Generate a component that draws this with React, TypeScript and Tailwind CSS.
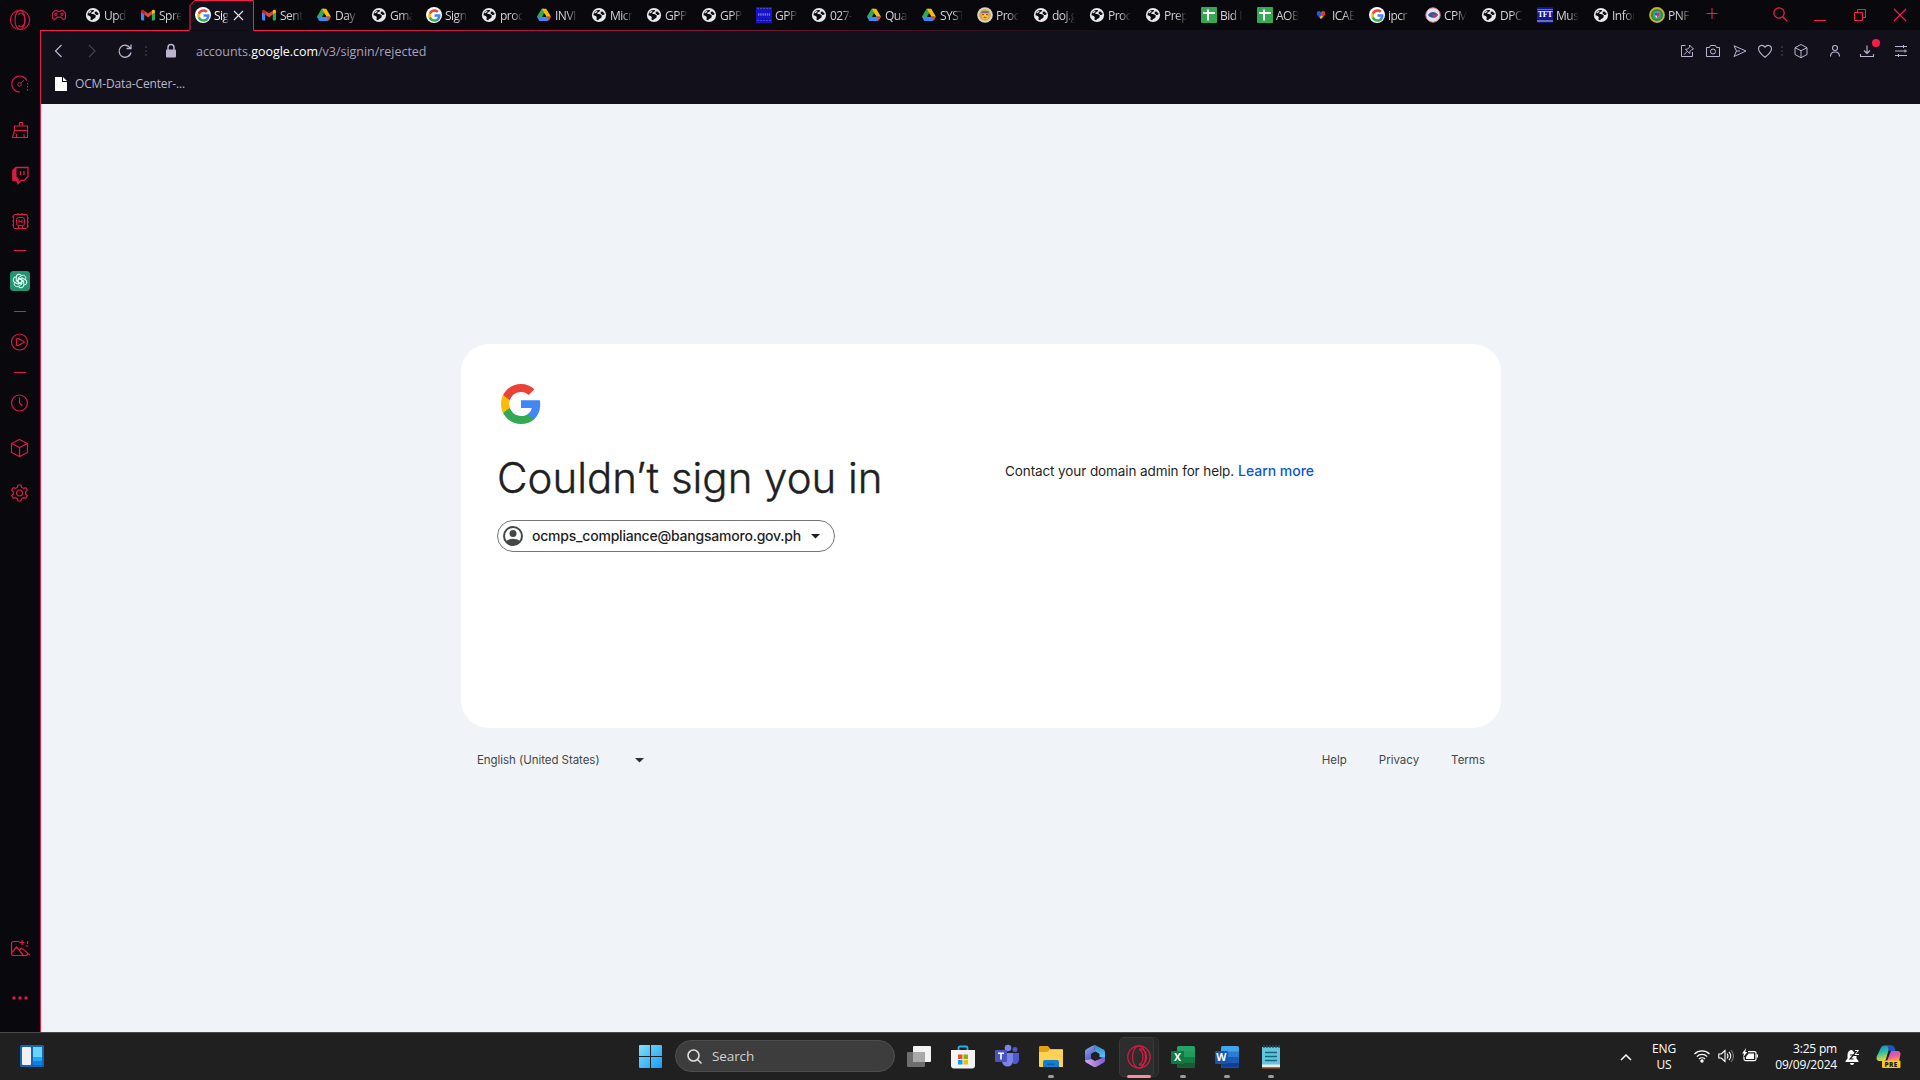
import React from 'react';

type IconName = 'globe' | 'gmail' | 'google' | 'drive' | 'sheet' | 'gppb' | 'seal' | 'icab' | 'cpm' | 'tft' | 'pnp';

function Globe() {
  return (
    <svg className="size-4" viewBox="0 0 16 16">
      <circle cx="8" cy="8" r="7.1" fill="#e8eaed" />
      <path d="M3 5.400C4.500 3.400 7 2.800 9 3.200L8.600 4.600 6.600 5.400 6.200 6.800l2.800.4 1.800 1.200-.4 2.400-2.200 1.200-1.200 1.200-1.600-.6.4-2.600-1.600-1.200L2.400 8.200z" fill="#0b0a10" />
      <path d="M9.600 4.800 11.600 4.400l1.600 1.800.2 1.600-2 .2-1.600-1.400z" fill="#0b0a10" />
      <path d="M4.600 4.200 6.600 3.900 5.600 5.600 3.800 6.600 3.400 5.600Z" fill="#e8eaed" />
    </svg>
  );
}

function GoogleG({ className }: { className: string }) {
  return (
    <svg className={className} viewBox="-2.4 -2.4 52.8 52.8">
      <path fill="#4285F4" d="M45.12 24.5c0-1.56-.14-3.06-.4-4.5H24v8.51h11.84c-.51 2.75-2.06 5.08-4.39 6.64v5.52h7.11c4.16-3.83 6.56-9.47 6.56-16.17z" />
      <path fill="#34A853" d="M24 46c5.94 0 10.92-1.97 14.56-5.33l-7.11-5.52c-1.97 1.32-4.49 2.1-7.45 2.1-5.73 0-10.58-3.87-12.31-9.07H4.34v5.7C7.96 41.07 15.4 46 24 46z" />
      <path fill="#FBBC05" d="M11.69 28.18C11.25 26.86 11 25.45 11 24s.25-2.86.69-4.18v-5.7H4.34C2.85 17.09 2 20.45 2 24c0 3.55.85 6.91 2.34 9.88l7.35-5.7z" />
      <path fill="#EA4335" d="M24 10.75c3.23 0 6.13 1.11 8.41 3.29l6.31-6.31C34.91 4.18 29.93 2 24 2 15.4 2 7.96 6.93 4.34 14.12l7.35 5.7c1.73-5.2 6.58-9.07 12.31-9.07z" />
    </svg>
  );
}

function Favicon({ name }: { name: IconName }) {
  switch (name) {
    case 'globe':
      return <Globe />;
    case 'gmail':
      return (
        <svg className="size-4" viewBox="0 0 16 16">
          <path fill="#4285f4" d="M1 4.5 4.2 7v6.4H2.1A1.1 1.1 0 0 1 1 12.3z" />
          <path fill="#34a853" d="M11.8 7 15 4.5v7.8a1.1 1.1 0 0 1-1.1 1.1h-2.1z" />
          <path fill="#ea4335" d="M4.2 3.7 8 6.6l3.8-2.9V7.6L8 10.5 4.2 7.6z" />
          <path fill="#c5221f" d="M1 4.2c0-1.4 1.5-2 2.6-1.1l.6.6v3.9L1 5.2z" />
          <path fill="#fbbc04" d="M15 4.2c0-1.4-1.5-2-2.6-1.1l-.6.6v3.9L15 5.2z" />
        </svg>
      );
    case 'google':
      return (
        <span className="flex size-4 shrink-0 items-center justify-center rounded-full bg-white">
          <GoogleG className="size-[15px]" />
        </span>
      );
    case 'drive':
      return (
        <svg className="size-4" viewBox="0 0 16 16">
          <path fill="#34a853" d="M5.6 1.8H8L10 5.3 4 13.6 1 9.6z" />
          <path fill="#fbbc04" d="M6 1.8h4.2l4.8 7.9h-4.6z" />
          <path fill="#4285f4" d="M3.8 9.7H13L11.8 14H3.2L1 9.8z" />
          <path fill="#ea4335" d="M10.6 9.7H15l-2.4 4.2z" />
          <path fill="#0b0a10" d="m8 6.2 2 3.5H6z" />
        </svg>
      );
    case 'sheet':
      return (
        <svg className="size-4" viewBox="0 0 16 16">
          <rect width="16" height="16" rx="1" fill="#34a853" />
          <path fill="#fff" d="M6 2.500h2V5h6v2H8v6.500H6V7H2V5h4z" />
        </svg>
      );
    case 'gppb':
      return (
        <svg className="size-4" viewBox="0 0 16 16">
          <rect width="16" height="16" fill="#1712c8" />
          <path stroke="#4a47b9" strokeDasharray="2 1" d="M1 1.500h14M1 13.500h14" />
          <path stroke="#6f6de5" strokeWidth="2.600" strokeDasharray="1.400 .8" d="M2 7.500h12" />
        </svg>
      );
    case 'seal':
      return (
        <svg className="size-4" viewBox="0 0 16 16">
          <circle cx="8" cy="8" r="7.8" fill="#d9d3cf" />
          <circle cx="8" cy="8" r="5.8" fill="#d9a63f" />
          <path fill="#f4dc3c" d="M4.5 7h7l-1.500 5h-4z" />
          <path stroke="#3569b8" strokeWidth="1.4" d="M4.4 5h7.2" />
          <path stroke="#d03a32" strokeWidth="1.3" d="M5 7.6h2M9 7.6h2M6.5 10.5h3" />
        </svg>
      );
    case 'icab':
      return (
        <svg className="size-4" viewBox="0 0 16 16">
          <path fill="#1d5ae0" d="M8 12C4 9 3.4 7 4 5.2 5 3.4 7 3.8 8 5.4z" />
          <path fill="#e23a2c" d="M8 12c4-3 4.6-5 4-6.8C11 3.4 9 3.8 8 5.4z" />
          <path fill="#f5b90f" d="m8 8.4 2 1.2-2 2.4-1.4-1.4z" />
        </svg>
      );
    case 'cpm':
      return (
        <svg className="size-4" viewBox="0 0 16 16">
          <circle cx="8" cy="8" r="7.2" fill="#e8e2ea" stroke="#c78a9b" />
          <path fill="#2b57a8" d="M3 8c2-4 8-4 10 0-2 3.6-8 3.6-10 0z" />
          <path fill="#d8323c" d="M6 7.6h7L10 11z" />
        </svg>
      );
    case 'tft':
      return (
        <span className="flex size-4 shrink-0 flex-col items-center justify-center border-y border-[#0a1788] bg-[#10199a] font-['Liberation_Serif',serif] text-[8px] leading-none font-bold tracking-[-0.3px] text-white">
          <span className="mb-px h-[1.500px] w-full bg-[#6f7094]" />
          TFT
          <span className="mt-px h-[1.500px] w-full bg-[#6f7094]" />
        </span>
      );
    case 'pnp':
      return (
        <svg className="size-4" viewBox="0 0 16 16">
          <circle cx="8" cy="8" r="7" fill="#2d8a4d" stroke="#c2b62c" strokeWidth="1.8" />
          <circle cx="8" cy="8" r="4" fill="#4c9d86" />
          <path fill="#e9e6ef" d="M6 5.5h4V9l-2 2-2-2z" />
          <path fill="#cf3550" d="M8 5.5h2V9L8 11z" />
          <path fill="#3b55b0" d="M6 5.5h2v3H6z" />
        </svg>
      );
  }
}

const narrowTabs: [IconName, string][] = [
  ['gmail', 'Sent'], ['drive', 'Day '], ['globe', 'Gma'], ['google', 'Sign'], ['globe', 'proc'], ['drive', 'INVI'],
  ['globe', 'Micr'], ['globe', 'GPP'], ['globe', 'GPP'], ['gppb', 'GPP'], ['globe', '027-'], ['drive', 'Qua'],
  ['drive', 'SYST'],
];
const wideTabs: [IconName, string][] = [
  ['seal', 'Proc'], ['globe', 'doj.g'], ['globe', 'Proc'], ['globe', 'Prep'], ['sheet', 'Bid I'], ['sheet', 'AOB'],
  ['icab', 'ICAE'], ['google', 'ipcr'], ['cpm', 'CPM'], ['globe', 'DPC'], ['tft', 'Mus'], ['globe', 'Infor'], ['pnp', 'PNF'],
];

function TabBody({ icon, label }: { icon: IconName; label: string }) {
  return (
    <>
      <Favicon name={icon} />
      <span className="mt-[2px] ml-[3px] w-[30px] shrink-0 text-[12px] tracking-[-0.5px] whitespace-pre text-[#d3d2d8] [mask-image:linear-gradient(to_right,black_12px,transparent_23px)]">
        {label}
      </span>
    </>
  );
}

function WindowControls() {
  return (
    <div className="ml-auto flex h-[30px] items-center text-[#fa1e4e]">
      <svg className="size-10" viewBox="0 0 40 40" fill="none" stroke="currentColor" strokeWidth="1.2">
        <circle cx="19" cy="18" r="5.2" /><path d="m23 22 4.4 4.4" />
      </svg>
      <svg className="size-10" viewBox="0 0 40 40" fill="none" stroke="currentColor"><path d="M14 25.5h12" /></svg>
      <svg className="size-10" viewBox="0 0 40 40" fill="none" stroke="currentColor">
        <path d="M14.5 17.5h8v8h-8zM17.500 17.500v-3h8v8h-3" />
      </svg>
      <svg className="size-10" viewBox="0 0 40 40" fill="none" stroke="currentColor" strokeWidth="1.1"><path d="m14 14 12 12M26 14 14 26" /></svg>
    </div>
  );
}

function TabStrip() {
  return (
    <div className="relative flex h-[31px] bg-[#09080d]">
      <div className="absolute top-[30px] -left-px h-px w-[149px] bg-[#fa1e4e]" />
      <div className="absolute top-[30px] left-[212px] h-px w-[1668px] bg-[#12101a]" />
      <div className="absolute top-[30px] left-[212px] h-px w-[860px] bg-linear-to-r from-[#fa1e4e] to-transparent" />
      <div className="flex h-[30px] w-[44px] items-center pl-[10px]">
        <svg className="h-[14px] w-4" viewBox="0 0 16 14" fill="none" stroke="#c81a42" strokeWidth="1.2">
          <path d="M4 2.500h2.200l1 1h1.600l1-1H12L14.400 5v5.500l-1.800 1.300-2.800-2.600H6.200l-2.800 2.600-1.800-1.300V5z" />
          <circle cx="5" cy="6.300" r="1.100" /><circle cx="11" cy="6.300" r="1.100" />
        </svg>
      </div>
      <div className="flex h-[30px] w-[55px] items-center"><TabBody icon="globe" label="Upd" /></div>
      <div className="flex h-[30px] w-[49px] items-center"><TabBody icon="gmail" label="Spre" /></div>
      <div className="relative flex h-[31px] w-[65px] items-center pb-px pl-[6px]">
        <svg className="absolute inset-0 h-[31px] w-[65px]" viewBox="0 0 65 31">
          <path d="M.5 30.500 1 30V5.500L5.500.5h59v30" fill="#12101a" stroke="#fa1e4e" />
        </svg>
        <span className="relative"><Favicon name="google" /></span>
        <span className="relative mt-[2px] ml-[3px] w-[19px] shrink-0 text-[12px] tracking-[-0.5px] text-white [mask-image:linear-gradient(to_right,black_9px,transparent_15px)]">Sig</span>
        <svg className="relative size-[11px]" viewBox="0 0 11 11" stroke="#e6e4ee" strokeWidth="1.1"><path d="m1 1 9 9M10 1 1 10" /></svg>
      </div>
      <div className="flex h-[30px] pl-[7px]">
        <div className="flex w-[716px]">
          {narrowTabs.map(([icon, label], i) => (
            <div key={i} className="flex w-[55px] shrink-0 items-center"><TabBody icon={icon} label={label} /></div>
          ))}
        </div>
        {wideTabs.map(([icon, label], i) => (
          <div key={i} className="flex w-14 items-center"><TabBody icon={icon} label={label} /></div>
        ))}
      </div>
      <svg className="mt-2 ml-px size-3" viewBox="0 0 12 12" stroke="#fa1e4e"><path d="M.5 5.500h11M6 0v11" /></svg>
      <WindowControls />
    </div>
  );
}

function Dots() {
  return (
    <svg className="h-[14px] w-1" viewBox="0 0 4 14" fill="#2f2b40"><path d="M1 2h2v2H1zM1 6h2v2H1zM1 10h2v2H1z" /></svg>
  );
}

const tool = 'size-4 shrink-0';

function AddressBar() {
  return (
    <div className="flex h-10 items-center text-[#bdb4d2]">
      <svg className="ml-[9px] size-4" viewBox="0 0 16 16" fill="none" stroke="currentColor" strokeWidth="1.200"><path d="M11.500 2 5.500 8l6 6" /></svg>
      <svg className="ml-[18px] size-4 text-[#454154]" viewBox="0 0 16 16" fill="none" stroke="currentColor" strokeWidth="1.200"><path d="m5 2 6 6-6 6" /></svg>
      <svg className="ml-[17px] size-4" viewBox="0 0 16 16" fill="none" stroke="currentColor" strokeWidth="1.300">
        <path d="M13.200 5A6 6 0 1 0 14 9.500M14 1.500v4h-4.500" />
      </svg>
      <span className="ml-[11px]"><Dots /></span>
      <svg className="ml-[15px] size-4" viewBox="0 0 16 16" fill="none">
        <rect x="3" y="6.500" width="10" height="8" rx="1" fill="#bdb4d2" /><path d="M5 7V4.500a3 3 0 0 1 6 0V7" stroke="#bdb4d2" strokeWidth="1.500" />
      </svg>
      <div className="mt-[2px] ml-[17px] text-[12.5px] tracking-[-0.03px] whitespace-nowrap text-[#aaa2be]">
        accounts.<span className="text-white">google.com</span>/v3/signin/rejected
      </div>
      <div className="ml-auto flex items-center">
        <svg className={tool} viewBox="0 0 16 16" fill="none" stroke="currentColor">
          <path d="M6.500 2.500h-4v11h11V9M10.500 2l4 4-1.500.3-2 2-.3 2.200L6.500 6.300l2.200-.3 2-2zM8.500 8.200l-3.500 3.500" />
        </svg>
        <svg className={`${tool} ml-[10px]`} viewBox="0 0 16 16" fill="none" stroke="currentColor">
          <path d="M1.500 4.500h3l1-2h5l1 2h3v9h-13z" /><circle cx="8" cy="8.500" r="2.500" />
        </svg>
        <svg className={`${tool} ml-[11px]`} viewBox="0 0 16 16" fill="none" stroke="currentColor"><path d="M2 2.800 14 8 2 13.500 4.500 8zM4.500 8H8" /></svg>
        <svg className={`${tool} ml-[9px]`} viewBox="0 0 16 16" fill="none" stroke="currentColor" strokeWidth="1.100">
          <path d="M8 14.300C4.500 11.500 1.500 9 1.500 5.700 1.500 2.300 6 1 8 4.200c2-3.200 6.500-1.900 6.500 1.500 0 3.300-3 5.800-6.500 8.600z" />
        </svg>
        <span className="ml-[7px]"><Dots /></span>
        <svg className={`${tool} ml-[9px]`} viewBox="0 0 16 16" fill="none" stroke="currentColor"><path d="M8 1.500 14 4.700v6.800L8 14.700l-6-3.200V4.700zM2 4.700l6 3 6-3M8 7.700v7" /></svg>
        <svg className={`${tool} ml-[18px]`} viewBox="0 0 16 16" fill="none" stroke="currentColor" strokeWidth="1.100">
          <circle cx="8" cy="5" r="2.500" /><path d="M3.500 13.500c0-6 9-6 9 0" />
        </svg>
        <span className="relative ml-4 size-4">
          <svg className="size-4" viewBox="0 0 16 16" fill="none" stroke="currentColor" strokeWidth="1.100"><path d="M8 2.500v8M5 7.500l3 3 3-3M1.500 11v2.500h13V11" /></svg>
          <span className="absolute -top-1 left-[13px] size-2 rounded-full bg-[#ff1b4b]" />
        </span>
        <svg className={`${tool} mr-[11px] ml-[18px]`} viewBox="0 0 16 16" fill="none" stroke="currentColor"><path d="M2 3.500h12M2 8h12M2 12.500h12M10.500 2v3M12 6.500v3M5.500 11v3" /></svg>
      </div>
    </div>
  );
}

const cell = 'flex w-10 shrink-0 items-center justify-center';
const sic = 'size-5 fill-none stroke-current';

function Divider({ className }: { className: string }) {
  return <div className={`${cell} ${className}`}><div className="h-px w-3 bg-[#e01c48]" /></div>;
}

function Sidebar() {
  return (
    <div className="flex w-10 shrink-0 flex-col bg-[#09080d] text-[#dc1b46]">
      <div className={`${cell} h-10`}>
        <svg className="size-[22px] fill-none stroke-current" viewBox="0 0 22 22" strokeWidth="1.100">
          <circle cx="11" cy="11" r="9.600" /><ellipse cx="11" cy="11" rx="5" ry="9.500" /><path d="M9.500 5.500c3-3 6.500 0 6.500 5.500s-3.500 8.500-6.500 5.500" />
        </svg>
      </div>
      <div className={`${cell} mt-[21px] h-[46px]`}>
        <svg className={sic} viewBox="0 0 20 20">
          <path d="M10 18A8 8 0 1 1 17 6.500" strokeWidth="1.200" /><path d="M17.500 9v9" strokeDasharray="1.500 1.500" /><circle cx="9.500" cy="10.500" r="1.800" /><path d="m11 9 3-3" />
        </svg>
      </div>
      <div className={`${cell} h-[46px]`}>
        <svg className={sic} viewBox="0 0 20 20"><path d="M9.500 6V2.500h3V6M4.500 6h13v4.500h-13zM4.500 10.500l-2 7h15v-7M6.500 17v-3M14 17v-3" strokeWidth="1.100" /></svg>
      </div>
      <div className={`${cell} h-[44px]`}>
        <svg className={sic} viewBox="0 0 20 20"><path d="M6 2.500h12v9l-4 4h-3l-3 3v-3H3v-10zM10.500 6v4M14 6v4" strokeWidth="1.300" /><path d="M3 5.500 6 2.500v9l2 2v4l-1 .5v-3H3z" fill="currentColor" /></svg>
      </div>
      <div className={`${cell} h-[47px]`}>
        <svg className={sic} viewBox="0 0 20 20"><rect x="3.500" y="3.500" width="14" height="14" rx="1.500" /><rect x="6.500" y="6.500" width="8" height="8" rx="2" /><path d="M9 8.500v4M12 8.500v4M9 10.500h3M2 6h1.500M2 10h1.500M2 14h1.500M17.500 7H19M17.500 11H19M17.500 15H19M8 2v1.500M12 2v1.500M8.500 14.500v3M12.500 14.500v3" /></svg>
      </div>
      <Divider className="h-[13px]" />
      <div className={`${cell} h-[47px]`}>
        <svg className="size-5" viewBox="0 0 20 20">
          <rect width="20" height="20" rx="3.500" fill="#229474" />
          <g transform="translate(10 10)" fill="none" stroke="#e9fff8" strokeWidth="1">
            {[0, 60, 120, 180, 240, 300].map((a) => (
              <path key={a} transform={`rotate(${a})`} d="M-1.800 2.900V-3.200L1.700-5.400C4.500-6.600 6.800-3.600 5.400-1.600" />
            ))}
          </g>
        </svg>
      </div>
      <Divider className="h-[15px]" />
      <div className={`${cell} h-[46px]`}>
        <svg className={sic} viewBox="0 0 20 20" strokeWidth="1.200"><circle cx="9.500" cy="10" r="8" /><path d="M6.500 7 8 6.500l6 3v1l-6 3-1.500-.5z" /></svg>
      </div>
      <Divider className="h-[15px]" />
      <div className={`${cell} h-[46px]`}>
        <svg className={sic} viewBox="0 0 20 20" strokeWidth="1.200"><circle cx="9.500" cy="10" r="8" /><path d="M9.500 4.500V10l3 3" /></svg>
      </div>
      <div className={`${cell} h-[43px]`}>
        <svg className={sic} viewBox="0 0 20 20" strokeWidth="1.200"><path d="M9.500 1.500 17.500 5.500v9l-8 4-8-4v-9zM1.500 5.500l8 4 8-4M9.500 9.500v9" /></svg>
      </div>
      <div className={`${cell} h-[47px]`}>
        <svg className={sic} viewBox="0 0 20 20" strokeWidth="1.200"><circle cx="9.500" cy="10" r="3" /><path d="M8 2h3l.6 2.300 1.900 1.100 2.300-.7 1.500 2.600-1.700 1.700v2l1.700 1.700-1.500 2.600-2.300-.7-1.900 1.100L11 18H8l-.6-2.300-1.900-1.100-2.300.7-1.500-2.600L3.400 11V9L1.700 7.300l1.500-2.600 2.300.7 1.900-1.100z" /></svg>
      </div>
      <div className={`${cell} mt-auto h-[48px]`}>
        <svg className={sic} viewBox="0 0 20 20" strokeWidth="1.200"><path d="M9.500 2.500h-6a2 2 0 0 0-2 2v10a2 2 0 0 0 2 2h12a2 2 0 0 0 2-2M1.500 14l5-6 7 8.500M9.500 11l2-2 8.500 7M12 1v5M9.500 3.500h5M17.500 2v3M15.500 7h3" /></svg>
      </div>
      <div className={`${cell} mb-[9px] h-[50px]`}>
        <svg className="size-5 fill-current" viewBox="0 0 20 20"><circle cx="4" cy="10" r="1.700" /><circle cx="10" cy="10" r="1.700" /><circle cx="16" cy="10" r="1.700" /></svg>
      </div>
    </div>
  );
}

function SignInPage() {
  return (
    <div className="flex grow flex-col bg-[#f0f4f9] pt-[240px] pl-[420px] font-['Inter','Open_Sans',sans-serif]">
      <div className="flex h-[384px] w-[1040px] rounded-[28px] bg-white p-9">
        <div className="flex w-[508px] flex-col items-start">
          <GoogleG className="size-12" />
          <h1 className="mt-[24px] text-[42px] leading-[52px] font-light tracking-[-0.02px] whitespace-nowrap text-[#1f1f1f] [-webkit-text-stroke:0.4px_#1f1f1f]">Couldn’t sign you in</h1>
          <div className="mt-4 flex h-8 w-[338px] items-center rounded-full border border-[#747775] pl-[3px]">
            <svg className="size-6" viewBox="0 0 24 24" fill="#444746">
              <circle cx="12" cy="12" r="9" fill="none" stroke="#444746" strokeWidth="2" />
              <circle cx="12" cy="9.500" r="3.500" />
              <path d="M5 17.200c4-3.200 10-3.200 14 0-1.500 3-4 4.300-7 4.300s-5.500-1.300-7-4.300z" />
            </svg>
            <span className="mb-px ml-[7px] w-[270px] text-[14px] font-medium tracking-[-0.22px] whitespace-nowrap text-[#1f1f1f]">ocmps_compliance@bangsamoro.gov.ph</span>
            <svg className="ml-[9px] h-[5px] w-[9px]" viewBox="0 0 9 5" fill="#1f1f1f"><path d="M0 0h9L4.500 4.500z" /></svg>
          </div>
        </div>
        <div className="mt-[81px] flex h-5 gap-[4px] leading-5 whitespace-nowrap text-[#1f1f1f]">
          <span className="text-[13.5px] tracking-[-0.1px]">Contact your domain admin for help.</span>
          <span className="text-[14px] font-medium tracking-[-0.04px] text-[#0b57d0]">Learn more</span>
        </div>
      </div>
      <div className="mt-[22px] flex h-5 w-[1040px] items-center pr-4 pl-4 text-[11.500px] text-[#444746]">
        <span className="mt-[2px] w-[158px] tracking-[-0.05px] whitespace-nowrap">English (United States)</span>
        <svg className="h-[5px] w-[9px]" viewBox="0 0 9 5" fill="#2d2f31"><path d="M0 0h9L4.500 4.500z" /></svg>
        <span className="mt-[2px] mr-8 ml-auto">Help</span>
        <span className="mt-[2px] mr-8">Privacy</span>
        <span className="mt-[2px]">Terms</span>
      </div>
    </div>
  );
}

function TaskButton({ running, children }: { running?: boolean; children: React.ReactNode }) {
  return (
    <div className="relative flex h-12 w-11 shrink-0 items-center justify-center">
      {children}
      {running && <span className="absolute bottom-[3px] left-[19px] h-[3px] w-[6px] rounded-full bg-[#9b9b9b]" />}
    </div>
  );
}

function OfficeTile({ letter, colors }: { letter: string; colors: string[] }) {
  return (
    <svg className="size-6" viewBox="0 0 24 24">
      <rect x="6" y="1" width="18" height="21.500" rx="1.500" fill={colors[0]} />
      <path fill={colors[1]} d="M6 6.500h18V12H6z" /><path fill={colors[2]} d="M6 12h18v5.500H6z" /><path fill={colors[3]} d="M6 17.500h18V21a1.500 1.500 0 0 1-1.500 1.500h-15L6 21z" />
      <rect y="6" width="13" height="13" rx="1" fill={colors[4]} />
      <text x="6.400" y="16.200" textAnchor="middle" fontSize="10.500" fontWeight="700" fill="#fff" fontFamily="Open Sans, sans-serif">{letter}</text>
    </svg>
  );
}

function Taskbar() {
  return (
    <div className="flex h-12 shrink-0 items-center border-t border-[#4a4a4a] bg-[#202020]">
      <svg className="mb-px ml-5 size-6" viewBox="0 0 24 24">
        <rect y="1" width="24" height="22" rx="1.500" fill="#1565b5" /><rect x="2" y="3" width="9" height="18" rx="1" fill="#f1f1f1" />
        <path fill="#67d6ff" d="M13 3h9v10h-9z" /><path fill="#21a5f5" d="M13 13h9v4h-9z" /><path fill="#0a80e6" d="M13 17h9v4h-9z" />
      </svg>
      <svg className="ml-[595px] size-[23px]" viewBox="0 0 23 23">
        <defs><linearGradient id="win" x2="1" y2="1" gradientUnits="objectBoundingBox"><stop stopColor="#7fe0ff" /><stop offset="1" stopColor="#169cf5" /></linearGradient></defs>
        <path fill="url(#win)" d="M0 1a1 1 0 0 1 1-1h10v11H0zM12 0h10a1 1 0 0 1 1 1v10H12zM0 12h11v11H1a1 1 0 0 1-1-1zM12 12h11v10a1 1 0 0 1-1 1H12z" />
      </svg>
      <div className="mb-px ml-[13px] flex h-8 w-[220px] items-center rounded-full border border-[#4e4e4e] bg-[#3d3d3d] pl-[10px]">
        <svg className="size-[17px]" viewBox="0 0 17 17" fill="none" stroke="#dedede" strokeWidth="1.600"><circle cx="7.500" cy="7.500" r="5.500" /><path d="m11.500 11.500 4 4" /></svg>
        <span className="ml-[9px] text-[13.5px] tracking-[-0.1px] text-[#d0d0d0]">Search</span>
      </div>
      <div className="ml-[2px] flex">
        <TaskButton>
          <svg className="size-6" viewBox="0 0 24 24"><rect x="6" y="1" width="18" height="16" rx="1" fill="#f2f2f2" /><rect y="7" width="18" height="15" rx="1" fill="#6e6e6e" /><path fill="#a9a9a9" d="M6 7h12v10H6z" /></svg>
        </TaskButton>
        <TaskButton>
          <svg className="mr-px size-6" viewBox="0 0 24 24"><path d="M7.500 6V3a1.500 1.500 0 0 1 1.500-1.500h6A1.500 1.500 0 0 1 16.500 3v3" fill="none" stroke="#2aaeea" strokeWidth="1.800" /><path fill="#f4f4f4" d="M0 5h24v15.500a3 3 0 0 1-3 3H3a3 3 0 0 1-3-3z" /><path fill="#f25022" d="M7 9.500h4.500V14H7z" /><path fill="#7fba00" d="M12.500 9.500H17V14h-4.500z" /><path fill="#00a4ef" d="M7 15h4.500v4.500H7z" /><path fill="#ffb900" d="M12.500 15H17v4.500h-4.500z" /></svg>
        </TaskButton>
        <TaskButton>
          <svg className="mb-px size-6" viewBox="0 0 24 24"><circle cx="20" cy="5.500" r="2.500" fill="#5059c9" /><circle cx="13" cy="4" r="3.300" fill="#7b83eb" /><path fill="#5059c9" d="M16 9h8v7a4 4 0 0 1-6 3.500z" /><path fill="#7b83eb" d="M7 9h11v8a5.500 5.500 0 0 1-11 0z" /><rect y="6" width="12" height="12" rx="1" fill="#4b53bc" /><path d="M3 9.200h6M6 9v6.500" stroke="#fff" strokeWidth="1.600" /></svg>
        </TaskButton>
        <TaskButton running>
          <svg className="size-6" viewBox="0 0 24 24"><path fill="#e5a00f" d="M0 2a1 1 0 0 1 1-1h8l2.500 3H24v4H0z" /><path fill="#ffd255" d="M0 7h8l3-2.500h12a1 1 0 0 1 1 1V22H1a1 1 0 0 1-1-1z" /><path fill="#1180d2" d="M4 22v-5a2 2 0 0 1 2-2h12a2 2 0 0 1 2 2v5z" /><path fill="#0b60ae" d="M8 18.500h8V20H8z" /></svg>
        </TaskButton>
        <TaskButton>
          <svg className="mb-px size-6" viewBox="0 0 24 24">
            <defs>
              <linearGradient id="m1" x2=".4" y2="1"><stop stopColor="#8fb4f0" /><stop offset="1" stopColor="#4a4ec0" /></linearGradient>
              <linearGradient id="m2" x2="0" y2="1"><stop stopColor="#3a86c8" /><stop offset="1" stopColor="#58c8fb" /></linearGradient>
              <linearGradient id="m3" x2="1" y2="0"><stop stopColor="#e2a9ee" /><stop offset="1" stopColor="#7c5bd0" /></linearGradient>
            </defs>
            <path fill="url(#m1)" d="M12 1C9 2 3 4.500 2 7v10l6 3 1-7 2-5z" />
            <path fill="url(#m2)" d="m12 1 8.500 4.500Q22 6.500 22 8v6l-6-1-5-5z" />
            <path fill="url(#m3)" d="m2 16.500 7-1.500 5 1 8-3v3.500q0 1.500-1.500 2.300l-7 4q-1.500.8-3 0l-7-4Q2 18 2 16.500z" />
            <path d="M12.300 8 16 10v4.500L12 16.500 8.500 14.500V10z" fill="#202020" stroke="#202020" strokeLinejoin="round" />
          </svg>
        </TaskButton>
        <div className="relative flex h-12 w-11 items-center pl-[2px]">
          <div className="absolute top-1 left-[4px] h-10 w-[38px] rounded-[5px] border border-[#343434] bg-[#282828]" />
          <div className="absolute top-1 left-[2px] h-10 w-[35px] rounded-[5px] border border-[#3b3b3b] bg-[#2d2d2d]" />
          <svg className="relative ml-[8px] size-6" viewBox="0 0 24 24" fill="none" stroke="#d81b46" strokeWidth="1.200"><circle cx="12" cy="12" r="11.200" /><ellipse cx="12" cy="12" rx="6.500" ry="11" /><path d="M12 4.500c2.500-2 7.500 1 7.500 7.500s-5 9.500-7.500 7.500M12 4.500c3 1 4 4.500 4 7.500s-1 6.500-4 7.500" /></svg>
          <span className="absolute bottom-[3px] left-[10px] h-[3px] w-6 rounded-full bg-[#ff8b98]" />
        </div>
        <TaskButton running><OfficeTile letter="X" colors={['#25a366', '#219a60', '#107c41', '#185c37', '#117a43']} /></TaskButton>
        <TaskButton running><OfficeTile letter="W" colors={['#41a5ee', '#2b7cd3', '#185abd', '#103f91', '#1653b3']} /></TaskButton>
        <TaskButton running>
          <svg className="size-6" viewBox="0 0 24 24"><path fill="#64c5dc" d="M3 2h18v18H3z" /><path fill="#e9e9e9" d="M3 19.500h18V22H3z" /><path fill="#b5651d" d="M3 22h18v1.500H3z" /><path d="M6 7.500h12M6 11.500h12M6 15.500h12" stroke="#13687f" strokeWidth="1.500" /><path d="M5 0v3M8 0v3M11 0v3M14 0v3M17 0v3M20 0v3" stroke="#0e5d75" strokeWidth="1.400" /></svg>
        </TaskButton>
      </div>
      <div className="ml-auto flex h-full items-center text-[12px] leading-4 text-white">
        <svg className="size-3" viewBox="0 0 12 12" fill="none" stroke="#fff" strokeWidth="1.500"><path d="m1 9 5-5 5 5" /></svg>
        <div className="ml-[20px] w-6 text-center"><div className="-mx-1 tracking-[-0.2px]">ENG</div><div className="-mx-1 tracking-[-0.2px]">US</div></div>
        <svg className="mb-px ml-[18px] size-4" viewBox="0 0 16 16" fill="none" stroke="#fff" strokeWidth="1.200"><path d="M.5 6a10.500 10.500 0 0 1 15 0M2.800 8.600a7.400 7.400 0 0 1 10.400 0M5 11a4.200 4.200 0 0 1 6 0" /><circle cx="8" cy="13" r="1.100" fill="#fff" /></svg>
        <svg className="mb-px ml-2 size-4" viewBox="0 0 16 16" fill="none" stroke="#fff" strokeWidth="1.100"><path d="M.8 6h2.400L7 2.500v11L3.200 10H.8zM9 5.500q2 2.500 0 5M11 3.800q3.500 4.200 0 8.400" /><path stroke="#777" d="M13 2q5 6 0 12" /></svg>
        <svg className="mb-px ml-2 size-4" viewBox="0 0 16 16" fill="none" stroke="#fff" strokeWidth="1.200"><path d="M6 3.600h6.500a1.500 1.500 0 0 1 1.500 1.500v6a1.500 1.500 0 0 1-1.500 1.500h-9A1.500 1.500 0 0 1 2 11.100V9" /><path fill="#fff" stroke="none" d="M6.500 5.500H12V11H4V9z" /><path d="M15.400 6.500v3" strokeWidth="1.400" /><path fill="#fff" stroke="none" d="M4.200 0 0 5.500h2L1 9.500 5.300 4H3.200z" /></svg>
        <div className="ml-[16px] w-[63px] text-right tracking-[-0.2px] whitespace-nowrap"><div className="-ml-1">3:25 pm</div><div className="-ml-1">09/09/2024</div></div>
        <svg className="ml-[7px] size-4" viewBox="0 0 16 16" fill="#fff"><path d="M8 1C5 1 3.500 3 3.500 6v3.500L1.500 12v1h13v-1l-2-2.500V6z" /><path d="M6 14h4a2 2 0 0 1-4 0z" /><path d="M11 1.500h3.500l-3.500 4h4" fill="none" stroke="#202020" strokeWidth="3" /><path d="M6 6h3.500L6 10h3.500" fill="none" stroke="#202020" strokeWidth="1.200" /><path d="M11 1.500h3.500l-3.500 4h4" fill="none" stroke="#fff" strokeWidth="1" /></svg>
        <svg className="mr-[19px] ml-4 size-[25px]" viewBox="0 0 25 25">
          <defs><linearGradient id="ca" x2=".3" y2="1"><stop stopColor="#1f7bd8" /><stop offset=".5" stopColor="#2cc0a0" /><stop offset="1" stopColor="#f3d23a" /></linearGradient><linearGradient id="cb" x2=".3" y2="1"><stop stopColor="#a55be8" /><stop offset=".6" stopColor="#ea5a9c" /><stop offset="1" stopColor="#f79a5a" /></linearGradient></defs>
          <path fill="url(#ca)" d="M5 3.500C6 2 7 1.500 9 1.500h7.500c-2 0-3 1.500-3.500 3L10 15c-.5 1.500-1.500 2-3 2H4c-3 0-4-2-3.300-4.500z" /><path fill="#1d55b8" d="M11 1.500h4.500c2 0 3 1 3.500 3L19.500 7h-6z" /><path fill="url(#cb)" d="M15 7h6c3 0 4 2 3.300 4.500L23 17H11z" />
          <rect x="6" y="16.500" width="18.500" height="7.500" rx="1" fill="#ffc814" />
          <text x="15.200" y="22.800" textAnchor="middle" fontSize="6.500" fontWeight="800" letterSpacing=".4" fill="#1b1b1b" fontFamily="Open Sans, sans-serif">PRE</text>
        </svg>
      </div>
    </div>
  );
}

export default function App() {
  return (
    <div className="flex h-[1080px] w-[1920px] flex-col overflow-hidden bg-[#09080d] font-['Open_Sans','Noto_Sans',sans-serif]">
      <div className="flex h-[1032px]">
        <Sidebar />
        <div className="flex w-[1880px] flex-col">
          <div className="ml-[1px] h-[31px]"><TabStrip /></div>
          <div className="flex grow border-l border-[#e01c48]">
            <div className="flex w-full flex-col bg-[#12101a]">
              <AddressBar />
              <div className="flex h-[33px] items-center pb-[7px] pl-[14px]">
                <svg className="h-[14px] w-3" viewBox="0 0 12 14"><path fill="#fff" d="M0 0h7v5h5v9H0z" /><path fill="#fff" d="m8 0 4 4H8z" /></svg>
                <span className="mb-px ml-2 text-[12px] tracking-[-0.14px] text-[#bcb6cd]">OCM-Data-Center-...</span>
              </div>
              <SignInPage />
            </div>
          </div>
        </div>
      </div>
      <Taskbar />
    </div>
  );
}
